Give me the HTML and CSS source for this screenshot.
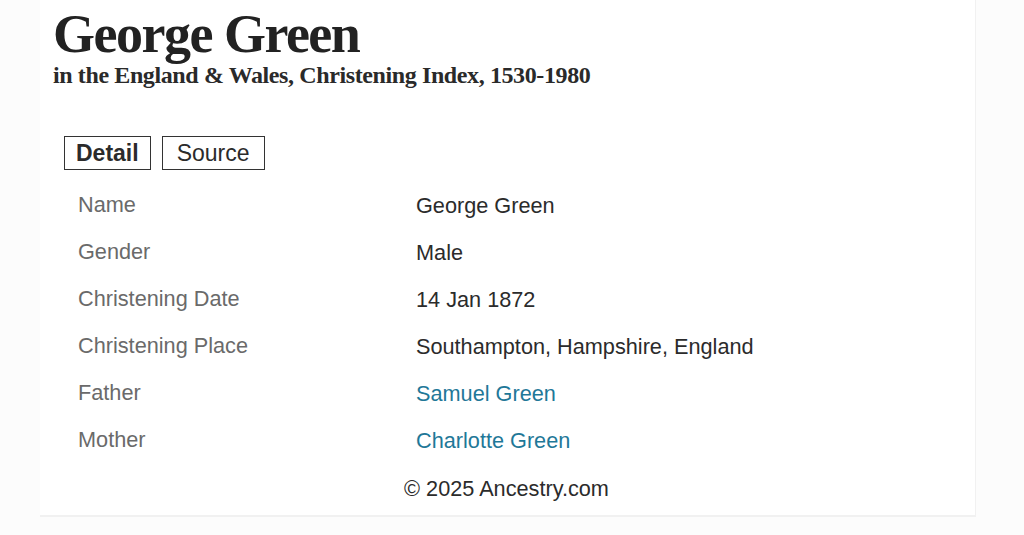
FILE: index.html
```html
<!DOCTYPE html>
<html lang="en">
<head>
<meta charset="utf-8">
<title>George Green - England &amp; Wales, Christening Index</title>
<link rel="stylesheet" href="styles.css">
</head>
<body>
<main class="card">
  <header class="record-header">
    <h1 class="title">George Green</h1>
    <h2 class="subtitle">in the England &amp; Wales, Christening Index, 1530-1980</h2>
  </header>
  <nav class="tabs">
    <button class="tab tab-active">Detail</button>
    <button class="tab">Source</button>
  </nav>
  <table class="facts">
    <tbody>
      <tr><th>Name</th><td>George Green</td></tr>
      <tr><th>Gender</th><td>Male</td></tr>
      <tr><th>Christening Date</th><td>14 Jan 1872</td></tr>
      <tr><th>Christening Place</th><td>Southampton, Hampshire, England</td></tr>
      <tr><th>Father</th><td><a href="#" class="link">Samuel Green</a></td></tr>
      <tr><th>Mother</th><td><a href="#" class="link">Charlotte Green</a></td></tr>
    </tbody>
  </table>
  <footer class="footer">© 2025 Ancestry.com</footer>
</main>
</body>
</html>
```

FILE: styles.css
```css
html, body {
  margin: 0;
  padding: 0;
  background: #fcfcfc;
}

body {
  font-family: "Liberation Sans", Arial, sans-serif;
  color: #2b2b2b;
}

.card {
  width: 935px;
  margin-left: 40px;
  background: #ffffff;
  border-right: 1px solid #f1f1f1;
  border-bottom: 2px solid #f1f1f1;
  padding: 0 0 3px 0;
  display: flex;
  flex-direction: column;
}

.record-header {
  padding: 7px 0 0 13px;
}

.title {
  margin: 0;
  font-family: "Liberation Serif", "Times New Roman", serif;
  font-weight: 700;
  font-size: 54px;
  line-height: 54px;
  letter-spacing: -1.5px;
  color: #222222;
}

.subtitle {
  margin: 0;
  font-family: "Liberation Serif", "Times New Roman", serif;
  font-weight: 700;
  font-size: 24px;
  line-height: 28px;
  letter-spacing: -0.39px;
  color: #2a2a2a;
}

.tabs {
  display: flex;
  gap: 11px;
  padding: 47px 0 0 24px;
}

.tab {
  font-family: "Liberation Sans", Arial, sans-serif;
  font-size: 23px;
  line-height: 32px;
  color: #2b2b2b;
  background: #ffffff;
  border: 1.5px solid #333333;
  border-radius: 0;
  padding: 0 11px;
  margin: 0;
}

.tab + .tab {
  padding: 0 14px;
}

.tab-active {
  font-weight: 700;
}

.facts {
  border-collapse: collapse;
  margin: 11px 0 0 24px;
  font-size: 21.7px;
}

.facts th {
  text-align: left;
  font-weight: 400;
  color: #6a6a6a;
  width: 352px;
  padding: 0 0 0 14px;
  height: 47px;
  vertical-align: middle;
  box-sizing: border-box;
}

.facts td {
  color: #2b2b2b;
  padding: 3px 0 0 0;
  height: 47px;
  vertical-align: middle;
  box-sizing: border-box;
}

.link {
  color: #1f7898;
  text-decoration: none;
}

.footer {
  text-align: center;
  font-size: 21.7px;
  line-height: 47px;
  margin-top: 2px;
  color: #2b2b2b;
  padding-right: 2px;
}
```
